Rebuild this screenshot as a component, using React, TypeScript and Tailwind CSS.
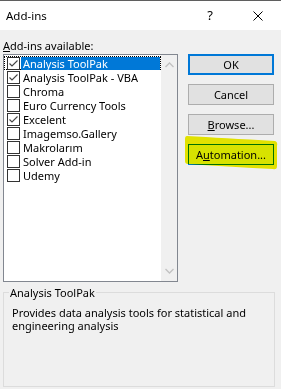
const addins = [
  { name: "Analysis ToolPak", checked: true, selected: true },
  { name: "Analysis ToolPak - VBA", checked: true },
  { name: "Chroma", checked: false },
  { name: "Euro Currency Tools", checked: false },
  { name: "Excelent", checked: true },
  { name: "Imagemso.Gallery", checked: false },
  { name: "Makrolarım", checked: false },
  { name: "Solver Add-in", checked: false },
  { name: "Udemy", checked: false },
];

function CheckBox({ checked }: { checked: boolean }) {
  return (
    <span className="relative z-10 flex h-[13px] w-[13px] shrink-0 items-center justify-center border border-[#333333] bg-white">
      {checked && (
        <svg width="11" height="11" viewBox="0 0 11 11">
          <path d="M1.5 5.5 L4 8 L9.5 2.5" fill="none" stroke="#444444" strokeWidth="1.1" />
        </svg>
      )}
    </span>
  );
}

function Chevron({ up }: { up?: boolean }) {
  return (
    <svg width="9" height="6" viewBox="0 0 9 6">
      <path
        d={up ? "M0.5 5 L4.5 1 L8.5 5" : "M0.5 1 L4.5 5 L8.5 1"}
        fill="none"
        stroke="#c2c2c2"
        strokeWidth="1.3"
      />
    </svg>
  );
}

function DialogButton({
  children,
  variant = "normal",
}: {
  children: React.ReactNode;
  variant?: "normal" | "default" | "hover";
}) {
  const styles = {
    normal: "border border-[#adadad] bg-[#e1e1e1]",
    default: "border-2 border-[#0078d7] bg-[#e1e1e1]",
    hover: "border border-[#0078d7] bg-[#e5f1fb]",
  }[variant];
  return (
    <div className={`flex h-[21px] w-[86px] items-center justify-center text-black ${styles}`}>
      {children}
    </div>
  );
}

export default function App() {
  return (
    <div className="relative h-[389px] w-[281px] overflow-hidden border-t border-[#5f5f5f] bg-[#f0f0f0] font-['Noto_Sans',sans-serif] text-[11px] leading-[13px] text-black">
      {/* title bar */}
      <div className="flex h-[29px] items-center bg-white pl-[6px]">
        <span className="text-[11.5px]">Add-ins</span>
        <span className="ml-auto mr-[40px] text-[13px]">?</span>
        <svg className="mr-[18px]" width="10" height="10" viewBox="0 0 10 10">
          <path d="M0.5 0.5 L9.5 9.5 M9.5 0.5 L0.5 9.5" stroke="#000" strokeWidth="1" />
        </svg>
      </div>

      <div className="px-[3px] pt-[9px]">
        <div>
          <span className="underline">A</span>dd-ins available:
        </div>

        <div className="mt-[2px] flex">
          {/* list box */}
          <div className="flex h-[228px] w-[175px] border border-[#828790] bg-white">
            <div className="flex-1 pt-[1px]">
              {addins.map((a) => (
                <div
                  key={a.name}
                  className={`flex h-[14px] items-center pl-[2px] ${a.selected ? "border border-dotted border-black" : "border border-transparent"}`}
                >
                  <CheckBox checked={a.checked} />
                  <span
                    className={`ml-[1px] flex h-[13px] flex-1 items-center whitespace-nowrap pl-[2px] ${a.selected ? "bg-[#0078d7] text-white" : ""}`}
                  >
                    {a.name}
                  </span>
                </div>
              ))}
            </div>
            <div className="flex w-[16px] flex-col items-center justify-between bg-[#f0f0f0] py-[7px]">
              <Chevron up />
              <Chevron />
            </div>
          </div>

          {/* buttons */}
          <div className="ml-[10px] flex flex-col gap-[9px]">
            <DialogButton variant="default">OK</DialogButton>
            <DialogButton>Cancel</DialogButton>
            <DialogButton>
              <span>
                <span className="underline">B</span>rowse...
              </span>
            </DialogButton>
            <DialogButton variant="hover">
              <span>
                A<span className="underline">u</span>tomation...
              </span>
            </DialogButton>
          </div>
        </div>

        {/* description group */}
        <fieldset className="mt-[4px] h-[101px] w-[272px] border border-[#dcdcdc] pl-[5px]">
          <legend className="px-[1px]">Analysis ToolPak</legend>
          <p className="mt-[7px] pl-[3px] leading-[13px]">
            Provides data analysis tools for statistical and engineering analysis
          </p>
        </fieldset>
      </div>

      {/* highlighter mark */}
      <svg className="pointer-events-none absolute left-[183px] top-[133px] mix-blend-multiply" width="96" height="38" viewBox="0 0 96 38">
        <path
          d="M4 2 Q40 4 92 7 Q95 8 94 12 L94 32 Q94 36 90 35 Q50 33 5 30 Q2 30 2 27 L2 5 Q2 2 4 2 Z"
          fill="#f0f000"
        />
      </svg>
    </div>
  );
}
